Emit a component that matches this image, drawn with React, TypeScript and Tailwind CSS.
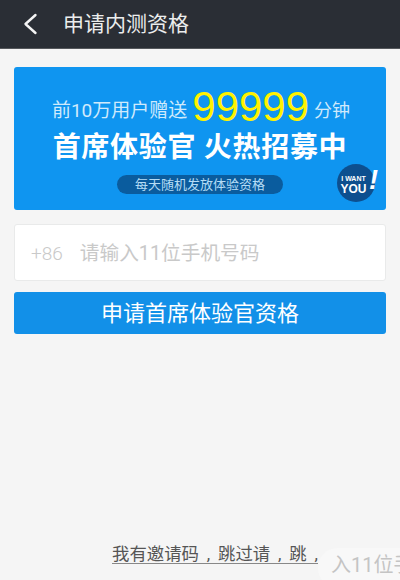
const cjk = "font-['Roboto','Noto_Sans_CJK_SC',sans-serif]"

export default function App() {
  return (
    <div className={`relative flex h-[580px] w-[400px] flex-col overflow-hidden bg-[#f5f5f5] ${cjk}`}>
      {/* title bar */}
      <header className="flex h-[49px] items-center border-b border-[#55585c] bg-[#2a2e35] pl-[23px] text-white">
        <svg width="15" height="22" viewBox="0 0 15 22" fill="none" stroke="#f4f4f4" strokeWidth="2.4" strokeLinecap="round" strokeLinejoin="round">
          <path d="M12.5 2 L2.5 11 L12.5 20" />
        </svg>
        <span className="ml-[25px] text-[21px] leading-none text-[#eceded]">申请内测资格</span>
      </header>

      <main className="flex flex-1 flex-col px-[14px] pt-[18px]">
        {/* banner */}
        <div className="relative flex h-[143px] flex-col items-center rounded-[3px] bg-[#0f95f0]">
          <div className="mt-[19px] ml-[2px] flex h-[42px] items-end text-[#cfeafc]">
            <span className="mb-[8px] text-[19px] leading-none">前10万用户赠送</span>
            <span className="ml-[5px] font-['Liberation_Sans',sans-serif] text-[42px] leading-[42px] text-[#fff200]">99999</span>
            <span className="mb-[8px] ml-[5px] text-[18px] leading-none">分钟</span>
          </div>
          <div className="mt-[5px] text-[28px] leading-[30px] font-bold tracking-[0.7px] whitespace-nowrap text-white">
            首席体验官 火热招募中
          </div>
          <div className="mt-[12px] flex h-[19px] w-[166px] items-center justify-center rounded-full bg-[#0a5c9e] text-[13px] leading-none text-[#b5dcf6]">
            每天随机发放体验资格
          </div>
          {/* sticker */}
          <div className="absolute top-[97px] left-[323px] flex h-[38px] w-[38px] flex-col items-center justify-center rounded-full bg-[#0d4f8f] pt-[3px] pr-[5px] font-['Liberation_Sans',sans-serif] font-bold text-white">
            <span className="text-[7px] leading-[8px] whitespace-nowrap">I WANT</span>
            <span className="text-[12px] leading-[12px]">YOU</span>
          </div>
          <span className="absolute top-[100px] left-[355px] font-['Liberation_Sans',sans-serif] text-[27px] leading-[27px] font-bold text-white italic">!</span>
        </div>

        {/* phone input */}
        <div className="mt-[14px] flex h-[57px] items-center rounded-[3px] border border-[#e9eaea] bg-white pt-[3px] pl-[16px] text-[#c9c9c9]">
          <span className="text-[19px] font-light">+86</span>
          <span className="ml-[17px] text-[19.7px]">请输入11位手机号码</span>
        </div>

        <button className="mt-[11px] h-[42px] rounded-[3px] bg-[#1290e8] text-[22px] text-white">
          申请首席体验官资格
        </button>
      </main>

      {/* invite link */}
      <div className="absolute top-[545px] left-[112px] border-b border-[#888] text-[17.4px] leading-[18px] [word-spacing:3.5px] whitespace-pre text-[#555]">
        我有邀请码 , 跳过请 , 跳 ,
      </div>

      {/* toast leftover */}
      <div className="absolute top-[548px] left-[318px] h-[40px] w-[100px] rounded-l-[20px] bg-[#f8f8f8] pt-[4px] pl-[13px] text-[20px] leading-[26px] whitespace-nowrap text-[#c4c4c4]">
        入11位手
      </div>
    </div>
  )
}
